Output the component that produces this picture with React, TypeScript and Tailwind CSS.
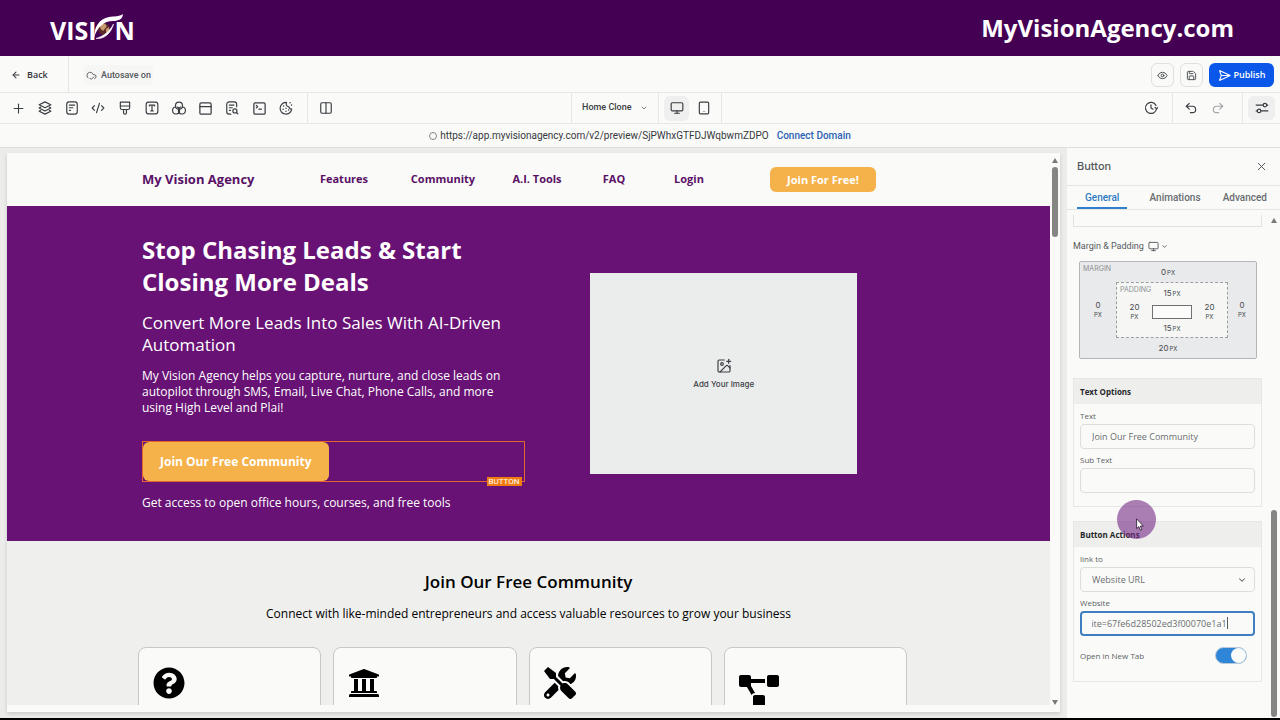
import { useEffect, useRef } from "react";
import type { ReactNode } from "react";
import {
  ArrowLeft,
  ChevronDown,
  CloudCheck,
  CodeXml,
  Columns2,
  Eye,
  ImagePlus,
  Monitor,
  PanelTop,
  Plus,
  Redo2,
  Save,
  SendHorizontal,
  SquareTerminal,
  Tablet,
  Undo2,
  X,
} from "lucide-react";
import { FaProjectDiagram, FaQuestionCircle, FaTools, FaUniversity } from "react-icons/fa";

function Glyph({ children, size = 14, stroke = 2 }: { children: ReactNode; size?: number; stroke?: number }) {
  return (
    <svg
      width={size}
      height={size}
      viewBox="0 0 24 24"
      fill="none"
      stroke="currentColor"
      strokeWidth={stroke}
      strokeLinecap="round"
      strokeLinejoin="round"
      aria-hidden="true"
    >
      {children}
    </svg>
  );
}

function StackIcon() {
  return (
    <Glyph>
      <path d="M12 1.500 22 6.500l-10 5-10-5z" />
      <path d="m4.500 10.500-2.500 1.500 10 5 10-5-2.500-1.500" />
      <path d="m4.500 16-2.500 1.500 10 5 10-5-2.500-1.500" />
    </Glyph>
  );
}

const tools: { label: string; icon: ReactNode }[] = [
  { label: "Add element", icon: <Plus size={15} strokeWidth={1.750} /> },
  { label: "Layers", icon: <StackIcon /> },
  {
    label: "Pages",
    icon: (
      <Glyph>
        <rect x="3" y="1.5" width="18" height="21" rx="4" />
        <path d="M7.5 7h9M7.5 11.5h6M7.5 16h2" />
      </Glyph>
    ),
  },
  { label: "Custom code", icon: <CodeXml size={14} /> },
  {
    label: "Styles",
    icon: (
      <Glyph>
        <path d="M4 2h16v9.5a3 3 0 0 1-3 3H7a3 3 0 0 1-3-3zM4 8.500h16M9.500 14.500V20a2.500 2.500 0 0 0 5 0v-5.500" />
      </Glyph>
    ),
  },
  {
    label: "Typography",
    icon: (
      <Glyph>
        <rect x="2" y="2" width="20" height="20" rx="4" />
        <path d="M7.500 8.500V7h9v1.500M12 7v10M10 17h4" />
      </Glyph>
    ),
  },
  {
    label: "Colors",
    icon: (
      <Glyph>
        <circle cx="12" cy="8" r="6" />
        <path d="M6.500 10.300A6 6 0 1 0 13 16c0-2.500-1.500-4.500-3.500-5.500" />
        <path d="M17.500 10.300A6 6 0 1 1 11 16c0-2.500 1.500-4.500 3.500-5.500" />
      </Glyph>
    ),
  },
  { label: "Popups", icon: <PanelTop size={15} /> },
  {
    label: "SEO",
    icon: (
      <Glyph>
        <path d="M20 10V5.500a4 4 0 0 0-4-4H7a4 4 0 0 0-4 4v13a4 4 0 0 0 4 4h3" />
        <path d="M7.500 7h8M7.500 11.500h5M7.500 16h2" />
        <circle cx="17" cy="17" r="3.500" />
        <path d="m19.700 19.700 2.500 2.500" />
      </Glyph>
    ),
  },
  { label: "Console", icon: <SquareTerminal size={15} /> },
  {
    label: "Cookies",
    icon: (
      <Glyph>
        <path d="M13 2.500A10 10 0 1 0 21.800 14a5 5 0 0 1-4.800-4 5 5 0 0 1-4-7.500z" />
        <path d="M8 8.500h.01M7 14h.01M12 12.500h.01M12 17.500h.01M16.500 15.500h.01M19 3h.01M21.500 7h.01" strokeWidth="2.500" />
      </Glyph>
    ),
  },
];

const navLinks = ["Features", "Community", "A.I. Tools", "FAQ", "Login"];

function BrandLogo() {
  return (
    <div className="flex items-center pt-1 font-['Open_Sans',sans-serif] text-[25px] font-bold leading-7 text-white" aria-label="Vision">
      <span>VISI</span>
      <svg width="30" height="26" viewBox="0 0 30 26" className="-ml-1 -mr-2 mb-1.5" aria-hidden="true">
        <circle cx="11" cy="15" r="6" fill="#5a2a2a" />
        <path d="M7 12c1-3 4-3 6-1s-1 3-2 5-4-1-4-4zM13 15l3-2v4l-3 2z" fill="#c79a70" />
        <path d="M1 24C1 13 6 5 16 3c5-.8 10-.2 14-3-.5 5-4 7-10 7C11 7 4 13 1 24z" fill="#fff" />
        <path d="M3 24.500c8 1 15-5 17.500-14.500C17 17 11 22 3 24.500z" fill="#fff" stroke="#fff" strokeWidth=".6" />
      </svg>
      <span>N</span>
    </div>
  );
}

function Measure({ value, stacked = false }: { value: string; stacked?: boolean }) {
  return (
    <span className={stacked ? "flex flex-col items-center leading-[10px]" : "flex items-baseline justify-center gap-px leading-[10px]"}>
      <span className="text-[8px]">{value}</span>
      <span className="text-[6px]">PX</span>
    </span>
  );
}

function BoxModel() {
  return (
    <div className="relative ml-1.5 mr-[5px] mt-[7px] grid h-[98px] shrink-0 grid-cols-[36px_1fr_28px] grid-rows-[20px_minmax(0,1fr)_20px] items-center rounded-xs border border-[#b4b6b8] bg-[#e9eaeb] text-[#45484d]">
      <span className="absolute left-[3px] top-[3px] text-[7px] leading-2 text-[#8d9094]">MARGIN</span>
      <div className="col-span-3">
        <Measure value="0" />
      </div>
      <Measure value="0" stacked />
      <div className="relative grid h-full grid-cols-[35px_1fr_35px] grid-rows-[21px_minmax(0,1fr)_17px] items-center border border-dashed border-[#9b9ea1] bg-[#f6f7f5]">
        <span className="absolute left-[3px] top-[3px] text-[7px] leading-2 text-[#8d9094]">PADDING</span>
        <div className="col-span-3">
          <Measure value="15" />
        </div>
        <Measure value="20" stacked />
        <div className="h-[14px] border border-[#6d7073] bg-[#fbfcf9]" />
        <Measure value="20" stacked />
        <div className="col-span-3">
          <Measure value="15" />
        </div>
      </div>
      <Measure value="0" stacked />
      <div className="col-span-3">
        <Measure value="20" />
      </div>
    </div>
  );
}

function PanelCard({ title, children }: { title: string; children: ReactNode }) {
  return (
    <section className="border border-[#e7e8e6]">
      <h3 className="bg-[#eeefed] px-1.5 text-[8px] font-bold leading-[25px] text-[#26282b]">{title}</h3>
      <div className="flex flex-col gap-1 px-1.5 pt-[5px]">{children}</div>
    </section>
  );
}

const fieldClass =
  "h-[25px] w-full rounded-sm border border-[#dcdedc] bg-[#fafbf8] pl-[11px] text-[9px] text-[#6a6d71] outline-none";
const labelClass = "relative flex flex-col gap-px text-[8px] font-medium leading-[14px] text-[#5c5f64]";

function SettingsPanel() {
  const website = useRef<HTMLInputElement>(null);
  useEffect(() => {
    if (website.current) website.current.scrollLeft = website.current.scrollWidth;
  }, []);

  return (
    <aside className="flex w-[213px] shrink-0 flex-col bg-[#fafbf8]">
      <header className="flex h-[38px] shrink-0 items-center justify-between border-b border-[#e4e6e4] pl-2.5 pr-3">
        <h2 className="text-[11px] font-medium text-[#55585d]">Button</h2>
        <button type="button" aria-label="Close panel" className="text-[#4b4e53]">
          <X size={13} strokeWidth={1.750} />
        </button>
      </header>
      <div
        role="tablist"
        className="flex h-6 shrink-0 justify-between border-b border-[#e4e6e4] pl-2.5 pr-[13px] font-['Roboto',sans-serif] text-[10px] font-medium text-[#686b70]"
      >
        <button type="button" role="tab" aria-selected="true" className="border-b-2 border-[#2f7fd0] px-2 pt-0.5 text-[#2f7ac4]">
          General
        </button>
        <button type="button" role="tab" aria-selected="false">
          Animations
        </button>
        <button type="button" role="tab" aria-selected="false">
          Advanced
        </button>
      </div>
      <div className="flex min-h-0 flex-1">
        <div className="flex min-w-0 flex-1 flex-col overflow-hidden pl-1.5">
          <div className="mt-[5px] h-3 shrink-0 border border-t-0 border-[#e1e3e1]" />
          <div className="mt-[11px] flex items-center gap-1 font-['Roboto',sans-serif] text-[9px] leading-4 text-[#55585d]">
            <span>Margin &amp; Padding</span>
            <button type="button" aria-label="Choose device" className="flex items-center gap-0.5">
              <Monitor size={11} />
              <ChevronDown size={7} strokeWidth={3} />
            </button>
          </div>
          <BoxModel />
          <div className="mt-[19px] flex flex-col gap-3.5 font-['Open_Sans',sans-serif]">
            <PanelCard title="Text Options">
              <label className={labelClass}>
                Text
                <input className={fieldClass} defaultValue="Join Our Free Community" />
              </label>
              <label className={`${labelClass} mb-[13px]`}>
                Sub Text
                <input className={fieldClass} />
              </label>
            </PanelCard>
            <PanelCard title="Button Actions">
              <label className={labelClass}>
                link to
                <select className={`${fieldClass} appearance-none font-normal`}>
                  <option>Website URL</option>
                </select>
                <ChevronDown size={10} strokeWidth={2.500} className="pointer-events-none absolute bottom-[7px] right-2" />
              </label>
              <label className={labelClass}>
                Website
                <input
                  ref={website}
                  className="h-[25px] w-full rounded-sm border-2 border-[#3f7fc0] bg-[#fafbf8] pl-2.5 pr-[26px] text-[9px] font-normal text-[#6a6d71] outline-none"
                  defaultValue="invite=67fe6d28502ed3f00070e1a1"
                />
                <span className="absolute bottom-[7px] right-[27px] h-3 w-px bg-[#55585d]" />
              </label>
              <label className="mb-[17px] mt-[7px] flex items-center justify-between pr-2 text-[8px] font-medium leading-[17px] text-[#5c5f64]">
                Open in New Tab
                <input
                  type="checkbox"
                  defaultChecked
                  className="flex h-[17px] w-8 appearance-none justify-end rounded-full border border-[#b9c9d8] bg-[#2f86d8] before:size-[15px] before:rounded-full before:bg-[#fafbf8]"
                />
              </label>
            </PanelCard>
          </div>
        </div>
        <div className="flex w-[18px] shrink-0 flex-col items-end justify-between pr-[3px] pt-2">
          <span className="h-0 w-0 border-x-[3px] border-b-[5px] border-x-transparent border-b-[#77797a]" />
          <span className="mb-px h-[207px] w-1.5 rounded-full bg-[#858684]" />
        </div>
      </div>
    </aside>
  );
}

function SitePreview() {
  return (
    <div className="min-w-0 flex-1 overflow-hidden font-['Open_Sans',sans-serif]">
      <div className="h-full overflow-hidden bg-[#eff0ee]">
        <nav className="bg-[#fafbf8]">
          <div className="mx-auto grid h-[53px] max-w-[781px] grid-cols-[161px_90px_108px_80px_74px_76px_1fr] items-center justify-items-center text-[11px] font-bold text-[#591067]">
            <a href="#home" className="justify-self-start pl-1 text-[13px]">
              My Vision Agency
            </a>
            {navLinks.map((item) => (
              <a key={item} href="#sections">
                {item}
              </a>
            ))}
            <a href="#join" className="rounded-md bg-[#f6b24a] px-[17px] py-1 leading-[17px] text-white">
              Join For Free!
            </a>
          </div>
        </nav>

        <section className="bg-[#681275] text-white">
          <div className="mx-auto grid max-w-[781px] grid-cols-2">
            <div className="px-1 pb-[30px] pt-[28px]">
              <h1 className="text-[24px] font-bold leading-8">
                Stop Chasing Leads &amp; Start
                <br />
                Closing More Deals
              </h1>
              <h2 className="mt-3.5 text-[17px] leading-[22px]">Convert More Leads Into Sales With AI-Driven Automation</h2>
              <p className="mt-3 max-w-[370px] text-[12px] leading-4">
                My Vision Agency helps you capture, nurture, and close leads on autopilot through SMS, Email, Live Chat, Phone Calls, and more using
                High Level and Plai!
              </p>
              <div className="relative mt-[25px] border border-[#e0682c]">
                <a href="#community" className="inline-block rounded-md bg-[#f6b24a] px-[17px] text-[12px] font-bold leading-[39px] align-top">
                  Join Our Free Community
                </a>
                <span className="absolute -bottom-[5px] right-0.5 bg-[#f07c12] px-0.5 font-['Roboto',sans-serif] text-[8px] leading-[9px]">BUTTON</span>
              </div>
              <p className="mt-[13px] text-[12px] leading-4">Get access to open office hours, courses, and free tools</p>
            </div>
            <button
              type="button"
              className="my-[67px] flex w-[267px] flex-col items-center justify-center gap-1 justify-self-center bg-[#ebecec] font-['Inter',sans-serif] text-[8px] font-medium text-[#3c3f44]"
            >
              <ImagePlus size={16} strokeWidth={1.750} />
              Add Your Image
            </button>
          </div>
        </section>

        <section className="text-center text-black">
          <h2 className="pt-[29px] text-[17px] font-semibold leading-6">Join Our Free Community</h2>
          <p className="mt-3 text-[12px] leading-4">Connect with like-minded entrepreneurs and access valuable resources to grow your business</p>
          <div className="mx-auto mt-[25px] grid max-w-[781px] grid-cols-4">
            {[
              <FaQuestionCircle key="q" size={32} />,
              <FaUniversity key="u" size={32} />,
              <FaTools key="t" size={32} />,
              <FaProjectDiagram key="p" className="mt-2 h-8 w-10" />,
            ].map((icon, i) => (
              <div key={i} className="mr-3 h-44 rounded-lg border border-[#c6c8c6] bg-[#fafbf8] pl-3.5 pt-[19px]">
                {icon}
              </div>
            ))}
          </div>
        </section>
      </div>
    </div>
  );
}

const iconButton = "flex h-6 w-[23px] items-center justify-center rounded-md border border-[#dfe1df] text-[#44474c]";

export default function App() {
  return (
    <div className="flex h-screen flex-col overflow-hidden border-b-2 border-black bg-[#fafbf8] font-['Inter',sans-serif] text-[#34373c]">
      <header className="flex h-14 shrink-0 items-center justify-between bg-[#440052] pl-[50px] pr-[46px]">
        <BrandLogo />
        <span className="font-['Open_Sans',sans-serif] text-[24px] font-bold text-white">MyVisionAgency.com</span>
      </header>

      <div className="flex h-[37px] shrink-0 items-center border-b border-[#e6e7e5] pr-1.5">
        <button
          type="button"
          className="flex h-full w-[69px] items-center gap-1.5 border-r border-[#e6e7e5] pl-[11px] pt-0.5 font-['Open_Sans',sans-serif] text-[9px] font-semibold"
        >
          <ArrowLeft size={10} strokeWidth={2.500} />
          Back
        </button>
        <div className="ml-[15px] mt-0.5 flex items-center gap-1 rounded-sm bg-[#f6f7f5] px-0.5 py-1 font-['Roboto',sans-serif] text-[9px] font-medium leading-3 text-[#55585d]">
          <CloudCheck size={11} />
          Autosave on
        </div>
        <div className="ml-auto mt-0.5 flex items-center gap-1.5">
          <button type="button" aria-label="Preview" className={iconButton}>
            <Eye size={11} />
          </button>
          <button type="button" aria-label="Save" className={iconButton}>
            <Save size={11} />
          </button>
          <button
            type="button"
            className="flex h-6 w-[65px] items-center justify-center gap-[3px] rounded-md bg-[#0b57ea] font-['Open_Sans',sans-serif] text-[9px] font-semibold text-white"
          >
            <SendHorizontal size={13} />
            Publish
          </button>
        </div>
      </div>

      <div className="flex h-[31px] shrink-0 items-stretch border-b border-[#e6e7e5] text-[#3a3d42]">
        <div className="flex w-[571px] shrink-0 items-stretch">
          <div className="flex w-[308px] items-center justify-between border-r border-[#e6e7e5] pl-2.5 pr-[13px]">
            {tools.map((tool) => (
              <button key={tool.label} type="button" aria-label={tool.label} className="flex w-4 justify-center">
                {tool.icon}
              </button>
            ))}
          </div>
          <button type="button" aria-label="Columns" className="ml-2.5 flex w-4 items-center justify-center">
            <Columns2 size={14} />
          </button>
        </div>
        <button
          type="button"
          className="flex w-[88px] items-center justify-between border-x border-[#e6e7e5] pl-2.5 pr-2.5 font-['Roboto',sans-serif] text-[9px] font-medium"
        >
          Home Clone
          <ChevronDown size={8} />
        </button>
        <div className="flex items-center gap-0.5 border-r border-[#e6e7e5] px-[5px]">
          <button type="button" aria-label="Desktop view" className="flex size-[25px] items-center justify-center rounded-md bg-[#eeefee]">
            <Monitor size={14} />
          </button>
          <button type="button" aria-label="Mobile view" className="flex size-[25px] items-center justify-center">
            <Tablet size={14} />
          </button>
        </div>
        <div className="ml-auto flex items-stretch">
          <button type="button" aria-label="Version history" className="flex w-11 items-center justify-center border-r border-[#e6e7e5]">
            <Glyph>
              <path d="M21.500 12.500a9.500 9.500 0 1 1-1-5" />
              <path d="M12 6.500V12l3.500 2M19 11l2.500 2.500L24 11" />
            </Glyph>
          </button>
          <div className="flex w-[70px] items-center justify-center gap-[13px] border-r border-[#e6e7e5] pr-1.5">
            <button type="button" aria-label="Undo">
              <Undo2 size={14} />
            </button>
            <button type="button" aria-label="Redo" className="text-[#a3a5a8]">
              <Redo2 size={14} />
            </button>
          </div>
          <div className="flex items-center px-[5px]">
            <button type="button" aria-label="Settings" className="flex h-6 w-[27px] items-center justify-center rounded-md bg-[#eeefee]">
              <Glyph>
                <path d="M2 7h12M20 7h2M2 17h2M10 17h12" />
                <circle cx="17" cy="7" r="3" />
                <circle cx="7" cy="17" r="3" />
              </Glyph>
            </button>
          </div>
        </div>
      </div>

      <div className="flex h-6 shrink-0 items-center justify-center gap-2 border-b border-[#dcdedb] font-['Roboto',sans-serif] text-[10px]">
        <span className="flex items-center gap-[3px]">
          <span className="size-2 rounded-full border border-[#85878a]" />
          https://app.myvisionagency.com/v2/preview/SjPWhxGTFDJWqbwmZDPO
        </span>
        <a href="#domain" className="font-medium text-[#2b62b5]">
          Connect Domain
        </a>
      </div>

      <main className="relative flex min-h-0 flex-1">
        <div className="flex min-w-0 flex-1 bg-[#ecedeb] px-[7px] pb-1.5 pt-[5px]">
          <div className="flex min-w-0 flex-1 bg-[#fafbf8] pb-[7px] shadow-[0_2px_4px_rgba(0,0,0,0.15)]">
            <SitePreview />
            <div className="flex w-2.5 shrink-0 flex-col items-center pt-[5px]">
              <span className="h-0 w-0 border-x-[3px] border-b-[5px] border-x-transparent border-b-[#77797a]" />
              <span className="mt-1 h-[70px] w-1.5 rounded-full bg-[#858684]" />
              <span className="mt-auto h-0 w-0 border-x-[3px] border-t-[5px] border-x-transparent border-t-[#77797a]" />
            </div>
          </div>
        </div>
        <SettingsPanel />
        <div className="pointer-events-none absolute right-[124px] top-[352px] size-[39px] rounded-full bg-[#752a86]/60">
          <svg width="8" height="13" viewBox="0 0 8 13" className="absolute left-[19px] top-[18px]" aria-hidden="true">
            <path d="M.6.800v9.800l2.200-2 1.500 3.600 1.500-.600-1.500-3.500h3z" fill="#fff" stroke="#26122c" strokeWidth=".8" />
          </svg>
        </div>
      </main>
    </div>
  );
}
